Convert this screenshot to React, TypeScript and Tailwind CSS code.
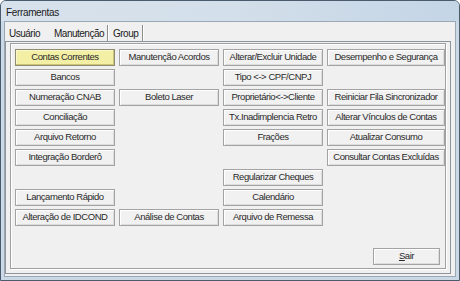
import React from 'react';

type Btn = { label: string; col: number; row: number; focused?: boolean };

const buttons: Btn[] = [
  { label: 'Contas Correntes', col: 1, row: 1, focused: true },
  { label: 'Manutenção Acordos', col: 2, row: 1 },
  { label: 'Alterar/Excluir Unidade', col: 3, row: 1 },
  { label: 'Desempenho e Segurança', col: 4, row: 1 },
  { label: 'Bancos', col: 1, row: 2 },
  { label: 'Tipo <-> CPF/CNPJ', col: 3, row: 2 },
  { label: 'Numeração CNAB', col: 1, row: 3 },
  { label: 'Boleto Laser', col: 2, row: 3 },
  { label: 'Proprietário<->Cliente', col: 3, row: 3 },
  { label: 'Reiniciar Fila Sincronizador', col: 4, row: 3 },
  { label: 'Conciliação', col: 1, row: 4 },
  { label: 'Tx.Inadimplencia Retro', col: 3, row: 4 },
  { label: 'Alterar Vínculos de Contas', col: 4, row: 4 },
  { label: 'Arquivo Retorno', col: 1, row: 5 },
  { label: 'Frações', col: 3, row: 5 },
  { label: 'Atualizar Consumo', col: 4, row: 5 },
  { label: 'Integração Borderô', col: 1, row: 6 },
  { label: 'Consultar Contas Excluídas', col: 4, row: 6 },
  { label: 'Regularizar Cheques', col: 3, row: 7 },
  { label: 'Lançamento Rápido', col: 1, row: 8 },
  { label: 'Calendário', col: 3, row: 8 },
  { label: 'Alteração de IDCOND', col: 1, row: 9 },
  { label: 'Análise de Contas', col: 2, row: 9 },
  { label: 'Arquivo de Remessa', col: 3, row: 9 },
];

// grid placement classes, written out so tailwind picks them up
const colClass: Record<number, string> = {
  1: 'col-start-1',
  2: 'col-start-2',
  3: 'col-start-3',
  4: 'col-start-4',
};
const rowClass: Record<number, string> = {
  1: 'row-start-1',
  2: 'row-start-2',
  3: 'row-start-3',
  4: 'row-start-4',
  5: 'row-start-5',
  6: 'row-start-6',
  7: 'row-start-7',
  8: 'row-start-8',
  9: 'row-start-9',
};

const WinButton: React.FC<{ label: React.ReactNode; focused?: boolean; className?: string }> = ({
  label,
  focused,
  className = '',
}) => (
  <div
    className={`h-[17px] flex items-center justify-center whitespace-nowrap border text-[9.5px] tracking-[-0.45px] text-[#2a2a2a] ${
      focused
        ? 'bg-[#f3efa4] border-[#8f8d70] shadow-[inset_-1px_-1px_0_#c9c47a,inset_1px_1px_0_#fbf8d0]'
        : 'bg-[#f1f1f1] border-[#a3a3a3] shadow-[inset_1px_1px_0_#ffffff,inset_-1px_-1px_0_#dcdcdc]'
    } ${className}`}
  >
    {label}
  </div>
);

export default function App() {
  return (
    <div
      className="w-[460px] h-[281px] flex flex-col bg-[#cbd9e7] border border-[#4a5b6d] rounded-t-[6px] overflow-hidden"
      style={{ fontFamily: '"Liberation Sans", Arial, sans-serif' }}
    >
      {/* Title bar */}
      <div className="h-[20px] shrink-0 flex items-center pt-[3px] px-[5px] bg-gradient-to-r from-[#d8e2ec] via-[#d3dfea] to-[#c4d5e6]">
        <span className="text-[10px] tracking-[-0.35px] text-[#1b1b1b]">Ferramentas</span>
      </div>

      {/* Client area */}
      <div className="flex-1 flex flex-col mx-[3px] mb-[3px] bg-[#f0f0f0] border border-[#9aa8b6]">
        {/* Tabs */}
        <div className="h-[19px] shrink-0 flex items-end text-[10px] tracking-[-0.5px] text-[#1b1b1b]">
          <div className="w-[44px] h-[16px] flex items-center pl-[4px]">Usuário</div>
          <div className="w-[59px] h-[16px] flex items-center pl-[5px] border-r border-r-[#8c8c8c] shadow-[1px_0_0_#ffffff]">
            Manutenção
          </div>
          <div className="w-[35px] h-[16px] flex items-center pl-[5px] border-r border-r-[#8c8c8c] shadow-[1px_0_0_#ffffff]">
            Group
          </div>
        </div>

        {/* Tab page */}
        <div className="flex-1 flex flex-col border border-[#8f949c] mr-[4px] mb-[2px] pl-[4px] pr-[4px] pt-[1px] pb-[4px]">
          <div className="flex-1 flex flex-col border border-[#a0a0a0] shadow-[inset_1px_1px_0_#ffffff,1px_1px_0_#ffffff] pl-[4px] pr-[2px] pt-[5px] pb-[3px]">
            <div className="grid grid-cols-[100px_100px_100px_118px] grid-rows-[repeat(9,17px)] gap-x-[4px] gap-y-[3px]">
              {buttons.map((b) => (
                <WinButton
                  key={b.label}
                  label={b.label}
                  focused={b.focused}
                  className={`${colClass[b.col]} ${rowClass[b.row]}`}
                />
              ))}
            </div>
            <div className="mt-auto flex justify-end pr-[3px]">
              <WinButton
                className="w-[67px]"
                label={
                  <span>
                    <span className="underline">S</span>air
                  </span>
                }
              />
            </div>
          </div>
        </div>
      </div>
    </div>
  );
}
